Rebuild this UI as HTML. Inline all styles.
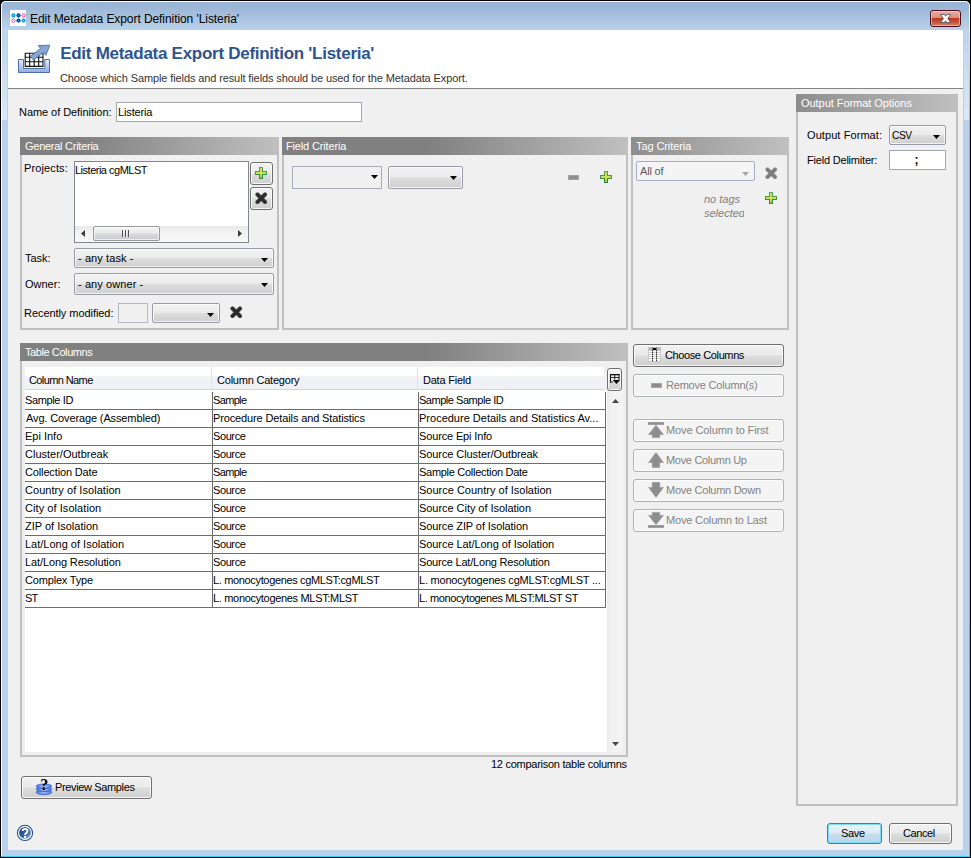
<!DOCTYPE html>
<html>
<head>
<meta charset="utf-8">
<title>Edit Metadata Export Definition 'Listeria'</title>
<style>
html,body{margin:0;padding:0;}
body{width:971px;height:858px;background:#000;overflow:hidden;position:relative;
 font-family:"Liberation Sans",sans-serif;font-size:11px;color:#000;}
*{box-sizing:border-box;}
.a{position:absolute;}
.t{position:absolute;white-space:nowrap;line-height:13px;height:13px;}
/* window frame */
#frame{left:1px;top:1px;width:969px;height:856px;border-radius:5px 5px 0 0;
 background:linear-gradient(#98b3d3 0px,#9bb6d6 6px,#b9d1ea 29px,#b9d1ea 100%);}
#hl-top{left:1px;top:1px;width:969px;height:12px;border:1px solid #fff;border-right-color:#f2f9fd;border-bottom:none;border-radius:5px 5px 0 0;}
#hl-left{left:1px;top:13px;width:1px;height:844px;background:#fff;}
#hl-right{left:969px;top:13px;width:1px;height:844px;background:linear-gradient(#eef8fd 0,#8fe2f6 60px,#3ad2f1 120px,#2fd0f0 100%);}
#hl-bot{left:1px;top:856px;width:969px;height:1px;background:#2fd0f0;}
#client{left:8px;top:30px;width:955px;height:820px;background:#f0f0f0;}
#head{left:8px;top:30px;width:955px;height:58px;background:#fff;}
#sep{left:8px;top:88px;width:955px;height:1px;background:#848484;}
/* panels */
.panel{position:absolute;border:2px solid #c0c0c0;background:#f0f0f0;}
.ph{position:absolute;height:18px;color:#fff;background:#808080 linear-gradient(90deg,#808080,#c0c0c0) right top/200px 100% no-repeat;}
.ph span{position:absolute;left:5px;top:3px;line-height:13px;white-space:nowrap;}
.tb{position:absolute;background:#fff;border:1px solid #a4a7af;}
.btn{position:absolute;border:1px solid #707070;border-radius:3px;
 background:linear-gradient(#f2f2f2 0,#ebebeb 48%,#dddddd 52%,#cfcfcf 100%);box-shadow:inset 0 0 0 1px rgba(255,255,255,.8);}
.btn.dis{border-color:#adb2b5;background:#f4f4f4;color:#838383;box-shadow:inset 0 0 0 1px #fcfcfc;}
.cb{position:absolute;border:1px solid #9a9aa8;border-radius:2px;
 background:linear-gradient(#f2f2f2 0,#ebebeb 48%,#dddddd 52%,#cfcfcf 100%);box-shadow:inset 0 0 0 1px rgba(255,255,255,.7);}
.arr{position:absolute;width:0;height:0;border-left:4px solid transparent;border-right:4px solid transparent;border-top:4px solid #000;}
.hl{background:#6d6d6d;}
.vl{background:#6d6d6d;}
.dt{color:#838383;}
</style>
</head>
<body>
<svg width="0" height="0" style="position:absolute;left:0;top:0"><defs>
<linearGradient id="pg1" x1="0" y1="0" x2="0" y2="1"><stop offset="0" stop-color="#52a85e"/><stop offset="1" stop-color="#2c8238"/></linearGradient><linearGradient id="pg2" x1="0" y1="0" x2="0" y2="1"><stop offset="0" stop-color="#cfe052"/><stop offset=".5" stop-color="#d3e158"/><stop offset="1" stop-color="#a9c83a"/></linearGradient><symbol id="plus" viewBox="0 0 12 12"><path d="M4 0h4v4h4v4h-4v4h-4v-4h-4v-4h4z" fill="url(#pg1)"/><path d="M5 1h2v4h4v2h-4v4h-2v-4h-4v-2h4z" fill="url(#pg2)"/></symbol>
<symbol id="xx" viewBox="0 0 12 12"><path d="M2.4 2.4L9.6 9.6M9.6 2.4L2.4 9.6" stroke="#606060" stroke-width="4.2" stroke-linecap="round" fill="none"/><path d="M2.4 2.4L9.6 9.6M9.6 2.4L2.4 9.6" stroke="#2b2b2b" stroke-width="3" stroke-linecap="round" fill="none"/></symbol>
<symbol id="xg" viewBox="0 0 12 12"><path d="M2.4 2.4L9.6 9.6M9.6 2.4L2.4 9.6" stroke="#a3a3a3" stroke-width="4.2" stroke-linecap="round" fill="none"/><path d="M2.4 2.4L9.6 9.6M9.6 2.4L2.4 9.6" stroke="#7c7c7c" stroke-width="3" stroke-linecap="round" fill="none"/></symbol>
<symbol id="dn" viewBox="0 0 7 4"><path d="M0 0h7l-3.5 4z" fill="currentColor"/></symbol>
</defs></svg>
<div class="a" id="frame"></div>
<div class="a" id="hl-top"></div>
<div class="a" id="hl-left"></div>
<div class="a" id="hl-right"></div>
<div class="a" id="hl-bot"></div>
<div class="a" style="left:2px;top:8px;width:5px;height:112px;background:linear-gradient(rgba(255,255,255,0) 0,rgba(255,255,255,.12) 30%,rgba(255,255,255,.5) 100%);"></div>
<div class="a" style="left:964px;top:8px;width:5px;height:112px;background:linear-gradient(rgba(255,255,255,0) 0,rgba(255,255,255,.12) 30%,rgba(255,255,255,.5) 100%);"></div>
<div class="a" id="client"></div>
<div class="a" id="head"></div>
<div class="a" id="sep"></div>


<!-- title icon -->
<svg class="a" style="left:10px;top:10px;" width="16" height="16" viewBox="0 0 16 16">
<rect width="16" height="16" fill="#fff"/>
<path d="M3.4 5.4H13.6M3.4 10.6H13.6M3.4 5.4V10.6M8.5 5.4V10.6M13.6 5.4V10.6" stroke="#9fd0ee" stroke-width=".7" fill="none"/>
<circle cx="3.4" cy="5.4" r="2.1" fill="#0aa6e6"/><circle cx="3.4" cy="5.4" r=".55" fill="#8fd8f6"/>
<circle cx="8.5" cy="5.4" r="2.1" fill="#0059a3"/><circle cx="8.5" cy="5.4" r=".5" fill="#4a8cc8"/>
<circle cx="13.6" cy="5.4" r="1.7" fill="#fff" stroke="#f0479f" stroke-width="1"/>
<circle cx="3.4" cy="10.6" r="1.7" fill="#fff" stroke="#f0479f" stroke-width="1"/>
<circle cx="8.5" cy="10.6" r="2.1" fill="#0059a3"/><circle cx="8.5" cy="10.6" r=".5" fill="#4a8cc8"/>
<circle cx="13.6" cy="10.6" r="2.1" fill="#0aa6e6"/><circle cx="13.6" cy="10.6" r=".55" fill="#8fd8f6"/>
</svg>
<!-- close button -->
<div class="a" style="left:930px;top:10px;width:31px;height:17px;border:1px solid #47101c;border-radius:3px;background:linear-gradient(#e9aa9b 0,#dc8d7c 47%,#b93a1e 50%,#c85438 75%,#dc8068 100%);box-shadow:inset 0 0 0 1px rgba(255,225,215,.55);"></div>
<svg class="a" style="left:939px;top:13px;" width="13" height="11" viewBox="0 0 13 11"><path transform="translate(1.6,1.5)" d="M0 0H3.9L5 1.7L6.1 0H10L7.2 4L10 8H6.1L5 6.3L3.9 8H0L2.8 4Z" fill="#fff" stroke="#47506a" stroke-width=".8" stroke-linejoin="round"/></svg>
<!-- header icon -->
<svg class="a" style="left:16px;top:42px;" width="36" height="34" viewBox="16 42 36 34">
<defs><linearGradient id="tray" x1="0" y1="0" x2="0" y2="1"><stop offset="0" stop-color="#e3ebf7"/><stop offset="1" stop-color="#93addb"/></linearGradient></defs>
<path d="M18.5 59.5H23.5V68.5H44.8V59.5H49.5V72.5H18.5Z" fill="url(#tray)" stroke="#4a70a8" stroke-width="1"/>
<rect x="25" y="53" width="18" height="13.6" fill="#fff"/>
<path d="M25 53.2H43.2M25 57.2H43.2M25 61.7H43.2M25 66.4H43.2M25.2 53V66.8M29.7 53V66.8M34.2 53V66.8M38.7 53V66.8M43 53V66.8" stroke="#111" stroke-width="1.1" fill="none"/>
<path d="M49.8 45.2L38.3 45.6L40.6 48.5L30.2 56.5L33.5 60.1L43.6 52.3L45.9 55.3Z" fill="#86a4d4" stroke="#4a70a8" stroke-width=".9" stroke-linejoin="round"/>
</svg>
<!-- TITLEBAR -->
<div class="t" id="wtitle" style="left:30.0px;top:12px;font-size:12px;line-height:14px;height:14px;letter-spacing:-0.071px;">Edit Metadata Export Definition 'Listeria'</div>

<!-- HEADER -->
<div class="t" id="htitle" style="left:60.2px;top:45px;font-size:17px;font-weight:bold;color:#2c5590;line-height:18px;height:18px;letter-spacing:-0.274px;">Edit Metadata Export Definition 'Listeria'</div>
<div class="t" id="hsub" style="left:60.0px;top:72px;color:#333;letter-spacing:-0.112px;">Choose which Sample fields and result fields should be used for the Metadata Export.</div>


<!-- NAME ROW -->
<div class="t" id="lname" style="left:19.0px;top:106px;letter-spacing:-0.057px;">Name of Definition:</div>
<div class="tb" style="left:116px;top:102px;width:246px;height:20px;"></div>
<div class="t" id="vname" style="left:118.0px;top:106px;letter-spacing:-0.144px;">Listeria</div>

<!-- GENERAL CRITERIA -->
<div class="panel" style="left:20px;top:137px;width:259px;height:193px;"></div>
<div class="ph" style="left:20px;top:137px;width:259px;--s:38%;"></div>
<div class="t" id="phgen" style="left:25.0px;top:140px;color:#fff;letter-spacing:-0.264px;">General Criteria</div>
<div class="t" id="lproj" style="left:24.0px;top:162px;letter-spacing:0.125px;">Projects:</div>
<div class="tb" style="left:74px;top:161px;width:175px;height:82px;border-color:#828790;"></div>
<div class="t" id="vproj" style="left:75.0px;top:164px;letter-spacing:-0.498px;">Listeria cgMLST</div>
<div class="a" id="hsb" style="left:75px;top:226px;width:173px;height:16px;background:linear-gradient(#e9e9e9,#f3f3f3 40%,#f7f7f7);"></div>
<div class="a" style="left:93px;top:226px;width:67px;height:15px;border:1px solid #979797;border-radius:2px;background:linear-gradient(#f5f5f5 0,#e9e9eb 48%,#d9dadc 52%,#c8c9cb 100%);box-shadow:inset 0 0 0 1px rgba(255,255,255,.7);"></div>
<div class="a" style="left:122px;top:230px;width:1px;height:7px;background:#4c4c4c;box-shadow:3px 0 0 #4c4c4c,6px 0 0 #4c4c4c,1px 0 0 rgba(255,255,255,.6),4px 0 0 rgba(255,255,255,.6),7px 0 0 rgba(255,255,255,.6);"></div>
<svg class="a" style="left:81px;top:230px;" width="4" height="7"><path d="M4 0v7l-4-3.5z" fill="#3a3a3a"/></svg>
<svg class="a" style="left:238px;top:230px;" width="4" height="7"><path d="M0 0v7l4-3.5z" fill="#3a3a3a"/></svg>
<div class="btn" style="left:250px;top:162px;width:23px;height:23px;"></div>
<div class="btn" style="left:250px;top:187px;width:23px;height:23px;"></div>
<svg class="a" style="left:255px;top:167px;" width="12" height="12"><use href="#plus"/></svg>
<svg class="a" style="left:255.3px;top:191.8px;" width="12.5" height="12.5"><use href="#xx"/></svg>
<div class="t" id="ltask" style="left:25.0px;top:252px;letter-spacing:0.000px;">Task:</div>
<div class="cb" style="left:74px;top:248px;width:200px;height:20px;"></div>
<div class="t" id="vtask" style="left:78.0px;top:252px;letter-spacing:0.091px;">- any task -</div>
<svg class="a" style="left:261px;top:258px;color:#000;" width="7" height="4"><use href="#dn"/></svg>
<div class="t" id="lowner" style="left:25.0px;top:278px;letter-spacing:0.000px;">Owner:</div>
<div class="cb" style="left:74px;top:273px;width:200px;height:22px;"></div>
<div class="t" id="vowner" style="left:78.0px;top:278px;letter-spacing:0.086px;">- any owner -</div>
<svg class="a" style="left:261px;top:283px;color:#000;" width="7" height="4"><use href="#dn"/></svg>
<div class="t" id="lrecent" style="left:24.0px;top:307px;letter-spacing:-0.061px;">Recently modified:</div>
<div class="tb" style="left:118px;top:303px;width:30px;height:20px;background:#f0f0f0;border-color:#b5b8c0;"></div>
<div class="cb" style="left:152px;top:303px;width:68px;height:20px;"></div>
<svg class="a" style="left:207px;top:313px;color:#000;" width="7" height="4"><use href="#dn"/></svg>
<svg class="a" style="left:230.2px;top:305.6px;" width="12.5" height="12.5"><use href="#xx"/></svg>

<!-- FIELD CRITERIA -->
<div class="panel" style="left:282px;top:137px;width:346px;height:193px;"></div>
<div class="ph" style="left:282px;top:137px;width:346px;--s:40%;"></div>
<div class="t" id="phfield" style="left:286.0px;top:140px;color:#fff;letter-spacing:-0.154px;">Field Criteria</div>
<div class="tb" style="left:292px;top:166px;width:90px;height:23px;background:#f0f0f0;border-color:#a9abbb;"></div>
<svg class="a" style="left:371px;top:175px;color:#000;" width="7" height="4"><use href="#dn"/></svg>
<div class="cb" style="left:388px;top:166px;width:75px;height:23px;"></div>
<svg class="a" style="left:450px;top:176px;color:#000;" width="7" height="4"><use href="#dn"/></svg>
<div class="a" style="left:568px;top:175px;width:11px;height:5px;background:#8e8e8e;border:1px solid #a5a5a5;"></div>
<svg class="a" style="left:600px;top:171px;" width="12" height="12"><use href="#plus"/></svg>

<!-- TAG CRITERIA -->
<div class="panel" style="left:631px;top:137px;width:158px;height:193px;"></div>
<div class="ph" style="left:631px;top:137px;width:158px;--s:15%;"></div>
<div class="t" id="phtag" style="left:636.0px;top:140px;color:#fff;letter-spacing:-0.090px;">Tag Criteria</div>
<div class="tb" style="left:636px;top:161px;width:119px;height:20px;background:#f4f4f4;border-color:#a5acc4;border-radius:2px;"></div>
<div class="t" id="vallof" style="left:640.0px;top:165px;color:#5a5a5a;letter-spacing:-0.200px;">All of</div>
<svg class="a" style="left:742px;top:172px;color:#a6a6a6;" width="7" height="4"><use href="#dn"/></svg>
<svg class="a" style="left:765.2px;top:166.8px;" width="12.5" height="12.5"><use href="#xg"/></svg>
<div class="t" id="notags" style="left:704.0px;top:193px;color:#808080;font-style:italic;letter-spacing:0.002px;">no tags</div>
<div class="t" id="selected" style="left:704px;top:207px;color:#808080;font-style:italic;width:39.8px;overflow:hidden;">selected</div>
<svg class="a" style="left:765px;top:192px;" width="12" height="12"><use href="#plus"/></svg>

<!-- OUTPUT FORMAT OPTIONS -->
<div class="panel" style="left:796px;top:94px;width:162px;height:712px;"></div>
<div class="ph" style="left:796px;top:94px;width:162px;--s:15%;"></div>
<div class="t" id="phofo" style="left:801.0px;top:97px;color:#fff;letter-spacing:-0.050px;">Output Format Options</div>
<div class="t" id="lofmt" style="left:807.0px;top:129px;letter-spacing:0.080px;">Output Format:</div>
<div class="cb" style="left:889px;top:125px;width:57px;height:20px;"></div>
<div class="t" id="vcsv" style="left:892px;top:129px;letter-spacing:-0.5px;transform:scaleX(0.93);transform-origin:0 0;">CSV</div>
<svg class="a" style="left:933px;top:135px;color:#000;" width="7" height="4"><use href="#dn"/></svg>
<div class="t" id="lfdel" style="left:807.0px;top:154px;letter-spacing:-0.198px;">Field Delimiter:</div>
<div class="tb" style="left:889px;top:150px;width:57px;height:20px;"></div>
<div class="t" id="vsemi" style="left:914.6px;top:154px;font-weight:bold;font-size:12px;">;</div>


<!-- TABLE COLUMNS -->
<div class="panel" style="left:20px;top:343px;width:608px;height:414px;"></div>
<div class="ph" style="left:20px;top:343px;width:608px;--s:62%;"></div>
<div class="t" id="phtab" style="left:25.0px;top:346px;color:#fff;letter-spacing:-0.414px;">Table Columns</div>
<div class="a" id="tblbg" style="left:25px;top:367px;width:582px;height:385px;background:#fff;"></div>
<div class="a" id="vsb" style="left:607px;top:367px;width:15px;height:385px;background:linear-gradient(90deg,#ececec,#f1f1f1 30%,#f4f4f4);"></div>
<div class="a" id="thead" style="left:25px;top:367px;width:580px;height:23px;background:linear-gradient(#fff 0,#fff 38%,#f1f2f5 44%,#eff1f4 100%);border-bottom:1px solid #d5d5d5;"></div>
<div class="a" style="left:211px;top:367px;width:1px;height:22px;background:#e0e2e5;"></div>
<div class="a" style="left:417px;top:367px;width:1px;height:22px;background:#e0e2e5;"></div>
<div class="a" style="left:604px;top:367px;width:3px;height:24px;background:#f0f0f0;"></div>
<div class="t th" id="th1" style="left:29.0px;top:374px;letter-spacing:-0.600px;">Column Name</div>
<div class="t th" id="th2" style="left:217.0px;top:374px;letter-spacing:-0.213px;">Column Category</div>
<div class="t th" id="th3" style="left:423.0px;top:374px;letter-spacing:-0.220px;">Data Field</div>

<div class="a hl" style="left:25px;top:409px;width:581px;height:1px;"></div>
<div class="a hl" style="left:25px;top:427px;width:581px;height:1px;"></div>
<div class="a hl" style="left:25px;top:445px;width:581px;height:1px;"></div>
<div class="a hl" style="left:25px;top:463px;width:581px;height:1px;"></div>
<div class="a hl" style="left:25px;top:481px;width:581px;height:1px;"></div>
<div class="a hl" style="left:25px;top:499px;width:581px;height:1px;"></div>
<div class="a hl" style="left:25px;top:517px;width:581px;height:1px;"></div>
<div class="a hl" style="left:25px;top:535px;width:581px;height:1px;"></div>
<div class="a hl" style="left:25px;top:553px;width:581px;height:1px;"></div>
<div class="a hl" style="left:25px;top:571px;width:581px;height:1px;"></div>
<div class="a hl" style="left:25px;top:589px;width:581px;height:1px;"></div>
<div class="a hl" style="left:25px;top:607px;width:581px;height:1px;"></div>
<div class="a vl" style="left:212px;top:392px;width:1px;height:216px;"></div>
<div class="a vl" style="left:418px;top:392px;width:1px;height:216px;"></div>
<div class="a vl" style="left:605px;top:392px;width:1px;height:216px;"></div>
<div class="t" id="r0a" style="left:25.0px;top:394px;letter-spacing:-0.375px;">Sample ID</div>
<div class="t" id="r0b" style="left:213.0px;top:394px;letter-spacing:-0.660px;">Sample</div>
<div class="t" id="r0c" style="left:419.0px;top:394px;letter-spacing:-0.467px;">Sample Sample ID</div>
<div class="t" id="r1a" style="left:26.0px;top:412px;letter-spacing:-0.125px;">Avg. Coverage (Assembled)</div>
<div class="t" id="r1b" style="left:213.0px;top:412px;letter-spacing:-0.128px;">Procedure Details and Statistics</div>
<div class="t" id="r1c" style="left:419.0px;top:412px;letter-spacing:0.003px;">Procedure Details and Statistics Av...</div>
<div class="t" id="r2a" style="left:25.0px;top:430px;letter-spacing:-0.001px;">Epi Info</div>
<div class="t" id="r2b" style="left:213.0px;top:430px;letter-spacing:-0.400px;">Source</div>
<div class="t" id="r2c" style="left:419.0px;top:430px;letter-spacing:-0.143px;">Source Epi Info</div>
<div class="t" id="r3a" style="left:25.0px;top:448px;letter-spacing:0.001px;">Cluster/Outbreak</div>
<div class="t" id="r3b" style="left:213.0px;top:448px;letter-spacing:-0.400px;">Source</div>
<div class="t" id="r3c" style="left:419.0px;top:448px;letter-spacing:-0.090px;">Source Cluster/Outbreak</div>
<div class="t" id="r4a" style="left:25.0px;top:466px;letter-spacing:-0.141px;">Collection Date</div>
<div class="t" id="r4b" style="left:213.0px;top:466px;letter-spacing:-0.660px;">Sample</div>
<div class="t" id="r4c" style="left:419.0px;top:466px;letter-spacing:-0.286px;">Sample Collection Date</div>
<div class="t" id="r5a" style="left:25.0px;top:484px;letter-spacing:0.051px;">Country of Isolation</div>
<div class="t" id="r5b" style="left:213.0px;top:484px;letter-spacing:-0.400px;">Source</div>
<div class="t" id="r5c" style="left:419.0px;top:484px;letter-spacing:0.002px;">Source Country of Isolation</div>
<div class="t" id="r6a" style="left:25.0px;top:502px;letter-spacing:0.062px;">City of Isolation</div>
<div class="t" id="r6b" style="left:213.0px;top:502px;letter-spacing:-0.400px;">Source</div>
<div class="t" id="r6c" style="left:419.0px;top:502px;letter-spacing:-0.046px;">Source City of Isolation</div>
<div class="t" id="r7a" style="left:25.0px;top:520px;letter-spacing:-0.000px;">ZIP of Isolation</div>
<div class="t" id="r7b" style="left:213.0px;top:520px;letter-spacing:-0.400px;">Source</div>
<div class="t" id="r7c" style="left:419.0px;top:520px;letter-spacing:-0.092px;">Source ZIP of Isolation</div>
<div class="t" id="r8a" style="left:25.0px;top:538px;letter-spacing:0.000px;">Lat/Long of Isolation</div>
<div class="t" id="r8b" style="left:213.0px;top:538px;letter-spacing:-0.400px;">Source</div>
<div class="t" id="r8c" style="left:419.0px;top:538px;letter-spacing:-0.070px;">Source Lat/Long of Isolation</div>
<div class="t" id="r9a" style="left:25.0px;top:556px;letter-spacing:-0.113px;">Lat/Long Resolution</div>
<div class="t" id="r9b" style="left:213.0px;top:556px;letter-spacing:-0.400px;">Source</div>
<div class="t" id="r9c" style="left:419.0px;top:556px;letter-spacing:-0.200px;">Source Lat/Long Resolution</div>
<div class="t" id="r10a" style="left:25.0px;top:574px;letter-spacing:-0.178px;">Complex Type</div>
<div class="t" id="r10b" style="left:213.0px;top:574px;letter-spacing:-0.345px;">L. monocytogenes cgMLST:cgMLST</div>
<div class="t" id="r10c" style="left:419.0px;top:574px;letter-spacing:-0.212px;">L. monocytogenes cgMLST:cgMLST ...</div>
<div class="t" id="r11a" style="left:25.0px;top:592px;letter-spacing:-0.900px;">ST</div>
<div class="t" id="r11b" style="left:213.0px;top:592px;letter-spacing:-0.320px;">L. monocytogenes MLST:MLST</div>
<div class="t" id="r11c" style="left:419.0px;top:592px;letter-spacing:-0.392px;">L. monocytogenes MLST:MLST ST</div>

<!-- column control + scrollbar -->
<div class="btn" style="left:607px;top:368px;width:15px;height:23px;border-color:#6f6f6f;border-radius:3px;"></div>
<svg class="a" style="left:610px;top:374px;" width="10" height="10" viewBox="0 0 10 10" fill="#111"><rect x="0" y="0" width="9.5" height="1.3"/><rect x="0" y="0" width="1" height="8.5"/><rect x="0" y="3" width="9.5" height=".8"/><rect x="4.3" y="0" width=".9" height="5.6"/><rect x="8.5" y="0" width="1" height="6"/><rect x="0" y="7.6" width="2.8" height=".9"/><path d="M2.8 6H10L6.4 10z" fill="#000"/></svg>
<svg class="a" style="left:612px;top:399px;" width="7" height="4"><path d="M0 4h7l-3.5-4z" fill="#454545"/></svg>
<svg class="a" style="left:612px;top:742px;" width="7" height="4"><path d="M0 0h7l-3.5 4z" fill="#454545"/></svg>

<div class="t" id="cnt" style="left:491.0px;top:758px;letter-spacing:-0.271px;">12 comparison table columns</div>

<!-- RIGHT BUTTONS -->
<div class="btn" style="left:633px;top:344px;width:151px;height:23px;"></div>
<div class="t" id="bchoose" style="left:665.0px;top:349px;letter-spacing:-0.385px;">Choose Columns</div>
<div class="btn dis" style="left:633px;top:374px;width:151px;height:23px;"></div>
<div class="t dt" id="bremove" style="left:666.0px;top:379px;letter-spacing:-0.200px;">Remove Column(s)</div>
<div class="a" style="left:651px;top:383px;width:11px;height:5px;background:#8e8e8e;border:1px solid #a5a5a5;"></div>
<div class="btn dis" style="left:633px;top:419px;width:151px;height:23px;"></div>
<div class="t dt" id="bfirst" style="left:666.0px;top:424px;letter-spacing:-0.103px;">Move Column to First</div>
<div class="btn dis" style="left:633px;top:449px;width:151px;height:23px;"></div>
<div class="t dt" id="bup" style="left:666.0px;top:454px;letter-spacing:-0.309px;">Move Column Up</div>
<div class="btn dis" style="left:633px;top:479px;width:151px;height:23px;"></div>
<div class="t dt" id="bdown" style="left:666.0px;top:484px;letter-spacing:-0.268px;">Move Column Down</div>
<div class="btn dis" style="left:633px;top:509px;width:151px;height:23px;"></div>
<div class="t dt" id="blast" style="left:666.0px;top:514px;letter-spacing:-0.166px;">Move Column to Last</div>


<!-- move icons -->
<svg class="a" style="left:646px;top:418px;" width="20" height="114" viewBox="646 418 20 114" fill="#8d8d8d" stroke="#9d9d9d" stroke-width=".8" stroke-linejoin="miter">
<rect x="648.4" y="422.4" width="15.2" height="2.2"/>
<path d="M656 425.2L663.4 434.6H659.7V437.6H652.3V434.6H648.6Z"/>
<path d="M656 452.6L663.4 462.6H659.7V467.5H652.3V462.6H648.6Z"/>
<path d="M656 497.4L663.4 487.4H659.7V482.4H652.3V487.4H648.6Z"/>
<path d="M656 524.6L663.4 515.4H659.7V512.4H652.3V515.4H648.6Z"/>
<rect x="648.4" y="525.4" width="15.2" height="2.2"/>
</svg>
<!-- choose columns icon -->
<svg class="a" style="left:648px;top:347px;" width="13" height="15" viewBox="0 0 13 15">
<rect x=".5" y=".5" width="12" height="14" fill="#fff" stroke="#c6c6c6"/>
<path d="M.5 3.5H12.5M.5 5.5H12.5M.5 7.5H12.5M.5 9.5H12.5M.5 11.5H12.5" stroke="#d2d2d2" stroke-width="1" fill="none"/>
<rect x="1" y="1" width="3" height="2" fill="#b4b4b4"/><rect x="9" y="1" width="3" height="2" fill="#b4b4b4"/>
<rect x="5" y="1" width="3.5" height="2" fill="#000"/>
<path d="M4.5 0V3M8.5 0V3" stroke="#777" stroke-width="1" fill="none"/><path d="M4.5 3V14.5M8.5 3V14.5" stroke="#2a2a2a" stroke-width="1" stroke-dasharray="1 1" fill="none"/><path d="M4.5 4V14.5M8.5 4V14.5" stroke="#9a9a9a" stroke-width="1" stroke-dasharray="1 1" fill="none"/>
</svg>

<!-- help icon -->
<svg class="a" style="left:16px;top:824px;" width="18" height="18" viewBox="16 824 18 18">
<defs><linearGradient id="hg" x1="0" y1="0" x2="1" y2="1"><stop offset="0" stop-color="#133f88"/><stop offset=".45" stop-color="#2c5a9e"/><stop offset="1" stop-color="#86a8d4"/></linearGradient></defs>
<circle cx="25" cy="832.9" r="7.6" fill="#fff" stroke="#214d93" stroke-width="1.1"/>
<circle cx="25" cy="832.9" r="5.9" fill="url(#hg)"/>
<path d="M22.7 830.9C22.7 828.3 27.5 828.3 27.5 830.9C27.5 832.7 25.1 832.9 25.1 835" fill="none" stroke="#fff" stroke-width="1.9"/><rect x="24.1" y="836" width="2" height="2" fill="#fff"/>
</svg>
<!-- BOTTOM -->
<div class="btn" style="left:21px;top:776px;width:131px;height:23px;"></div>
<div class="t" id="bprev" style="left:55.0px;top:781px;letter-spacing:-0.358px;">Preview Samples</div>
<div class="btn" id="bsave" style="left:827px;top:823px;width:55px;height:21px;border-color:#3c7fb1;background:linear-gradient(#eaf4fa 0,#dcecf6 48%,#c6dfef 52%,#b9d7ea 100%);box-shadow:inset 0 0 0 1px #7fd9f8;"></div>
<div class="t" id="tsave" style="left:841.0px;top:827px;letter-spacing:-0.334px;">Save</div>
<div class="btn" id="bcancel" style="left:889px;top:823px;width:63px;height:21px;"></div>
<div class="t" id="tcancel" style="left:903.0px;top:827px;letter-spacing:-0.400px;">Cancel</div>

<!-- preview icon -->
<svg class="a" style="left:34px;top:777px;" width="20" height="20" viewBox="34 777 20 20">
<defs><radialGradient id="disc" cx=".5" cy=".5" r=".6"><stop offset="0" stop-color="#b4c8f4"/><stop offset=".55" stop-color="#6a8ee4"/><stop offset="1" stop-color="#2c58d0"/></radialGradient></defs>
<ellipse cx="44" cy="792.3" rx="7.8" ry="2.4" fill="url(#disc)" stroke="#345fd2" stroke-width=".6"/>
<ellipse cx="44" cy="789.3" rx="7.8" ry="2.4" fill="url(#disc)" stroke="#345fd2" stroke-width=".6"/>
<ellipse cx="44" cy="786.3" rx="7.8" ry="2.4" fill="url(#disc)" stroke="#345fd2" stroke-width=".6"/>
<text x="44.2" y="789.8" font-family="Liberation Serif, serif" font-weight="bold" font-size="16" text-anchor="middle" fill="#000">?</text>
</svg>
<!--SECTIONS3-->
</body>
</html>
